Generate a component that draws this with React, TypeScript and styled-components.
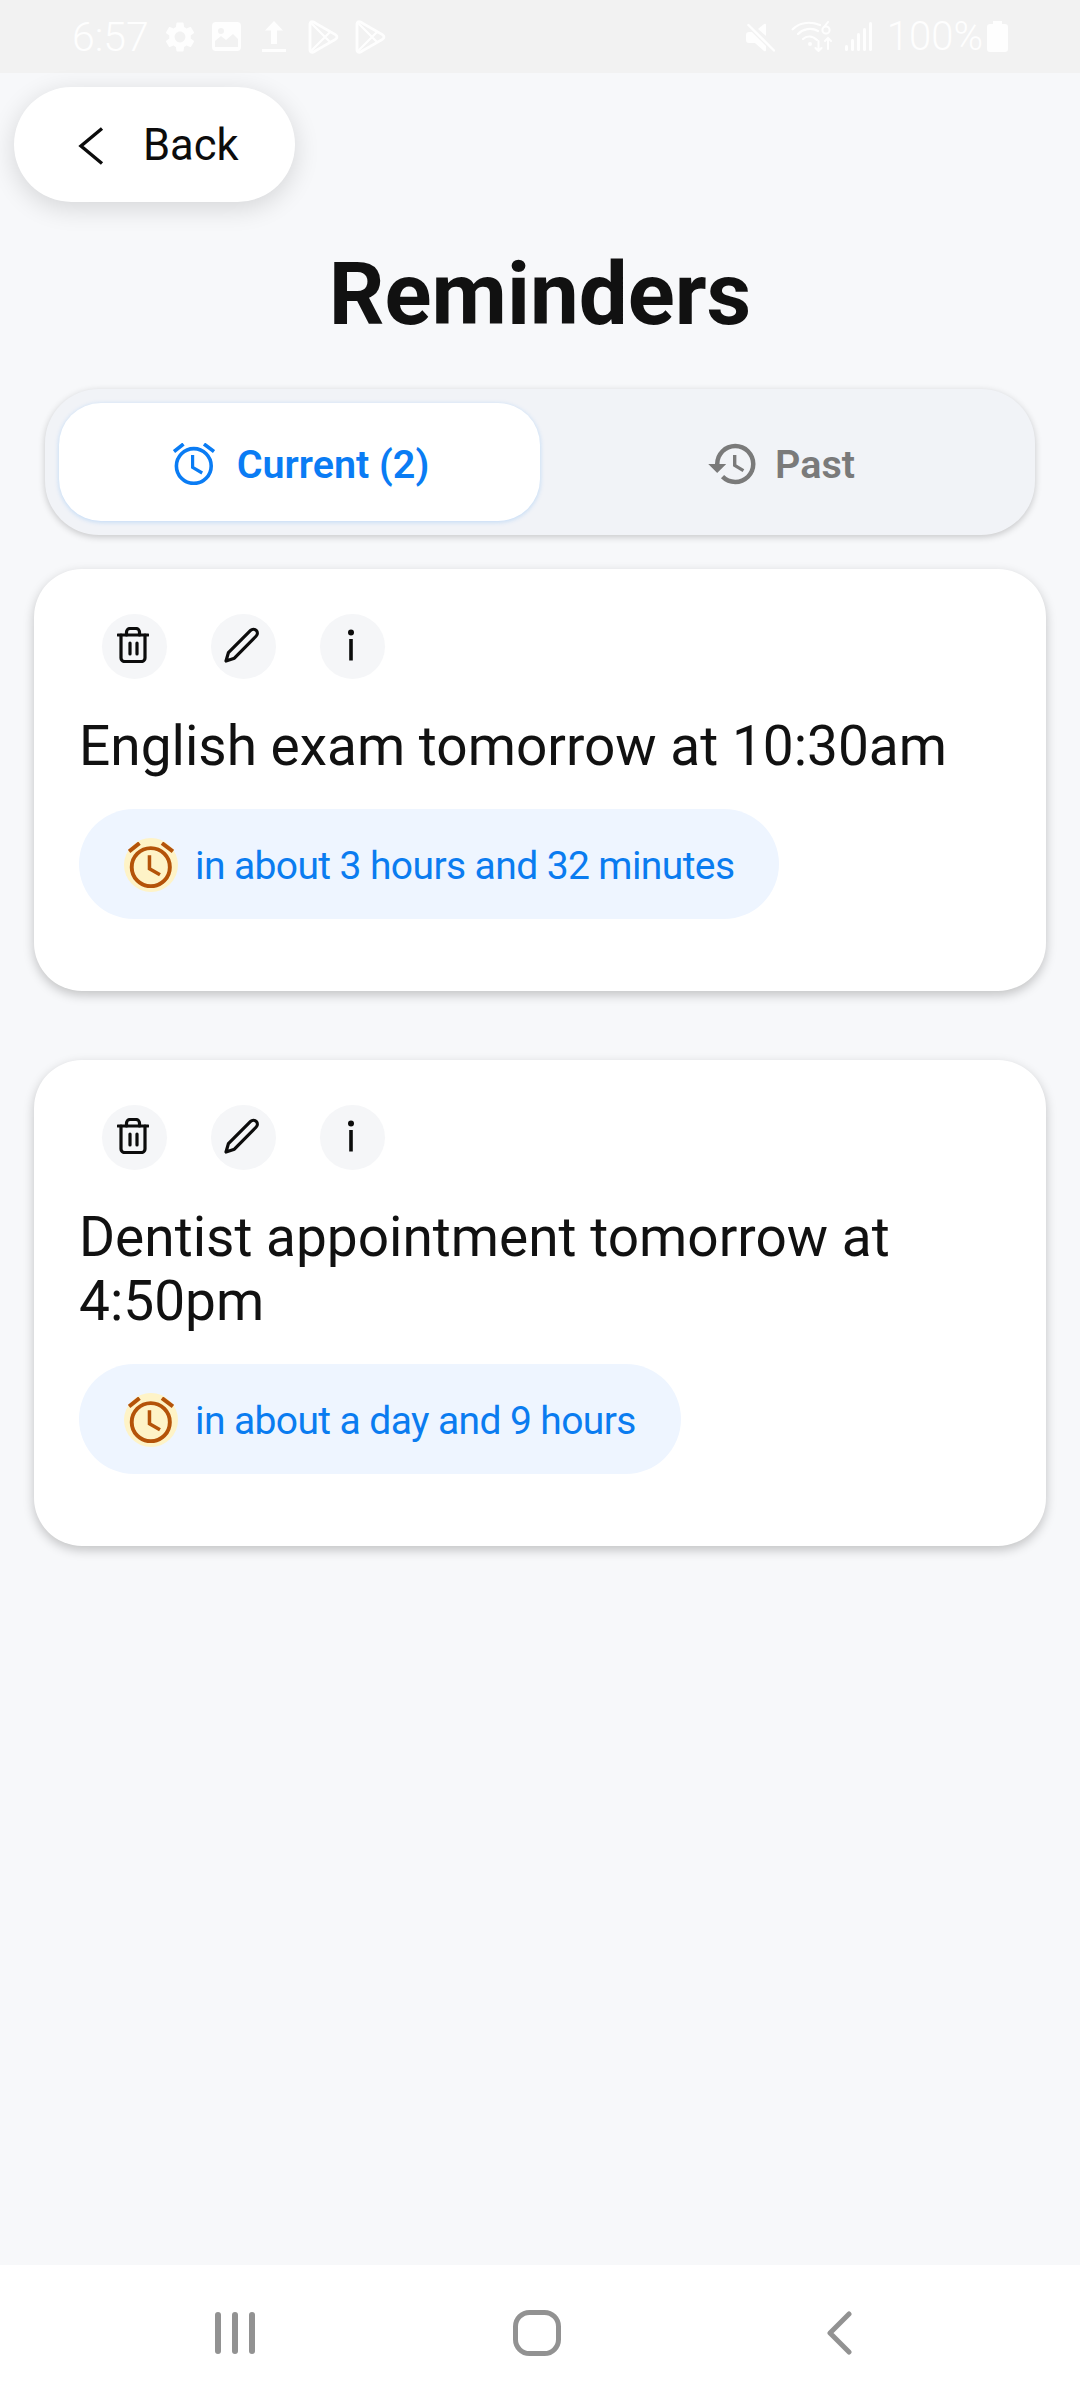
import { createGlobalStyle } from "styled-components";
import styled from "styled-components";
import { MdHistory, MdSettings } from "react-icons/md";

const GlobalStyle = createGlobalStyle`
  html, body {
    margin: 0;
    padding: 0;
    background: #f7f8fa;
  }
  * {
    box-sizing: border-box;
  }
`;

const Page = styled.div`
  width: 1080px;
  height: 2400px;
  display: flex;
  flex-direction: column;
  background: #f7f8fa;
  font-family: Roboto, "Liberation Sans", sans-serif;
  overflow: hidden;
`;

const StatusBar = styled.header`
  height: 73px;
  flex: none;
  display: flex;
  align-items: center;
  justify-content: space-between;
  padding: 0 72px;
  background: #f2f2f2;
  color: #fefefe;
`;

const StatusGroup = styled.div`
  display: flex;
  align-items: center;
`;

const StatusText = styled.span<{ $size: number }>`
  font-size: ${(p) => p.$size}px;
  font-weight: 300;
  line-height: 46px;
`;

const StatusIcon = styled.span<{ $left: number }>`
  display: flex;
  margin-left: ${(p) => p.$left}px;
`;

const Main = styled.main`
  flex: 1;
  display: flex;
  flex-direction: column;
  padding-top: 14px;
`;

const BackButton = styled.button`
  align-self: flex-start;
  width: 281px;
  height: 115px;
  margin-left: 14px;
  display: flex;
  align-items: center;
  gap: 39px;
  padding: 2px 0 0 64px;
  border: 0;
  border-radius: 58px;
  background: #fff;
  color: #0c0c0c;
  font-family: inherit;
  font-size: 43.5px;
  box-shadow: 0 6px 26px rgba(0, 0, 0, 0.14);
`;

const Title = styled.h1`
  margin: 42px 0 45px;
  font-size: 87px;
  line-height: 100px;
  font-weight: 700;
  text-align: center;
  color: #111;
`;

const Tabs = styled.div`
  width: 990px;
  height: 146px;
  margin: 0 0 34px 45px;
  padding: 14px 0 14px 14px;
  display: flex;
  border-radius: 54px;
  background: #f1f3f7;
  box-shadow: 0 2px 7px rgba(0, 0, 0, 0.2);
`;

const Tab = styled.div<{ $active?: boolean }>`
  flex: ${(p) => (p.$active ? "0 0 481px" : 1)};
  display: flex;
  align-items: center;
  justify-content: center;
  gap: ${(p) => (p.$active ? 22 : 15)}px;
  padding: ${(p) => (p.$active ? "4px 0 0 3px" : "4px 14px 0 0")};
  border-radius: 42px;
  font-size: 39.5px;
  font-weight: 600;
  color: ${(p) => (p.$active ? "#0a7cf4" : "#7a7a7a")};
  background: ${(p) => (p.$active ? "#fff" : "transparent")};
  box-shadow: ${(p) => (p.$active ? "0 1px 5px rgba(10, 124, 244, 0.22)" : "none")};
`;

const CardList = styled.div`
  display: flex;
  flex-direction: column;
  gap: 69px;
  margin-left: 34px;
`;

const Card = styled.article`
  width: 1012px;
  padding: 45px 45px 72px;
  border-radius: 48px;
  background: #fff;
  box-shadow: 0 4px 11px rgba(0, 0, 0, 0.22);
`;

const CardActions = styled.div`
  display: flex;
  gap: 44px;
  padding-left: 23px;
`;

const ActionButton = styled.button`
  width: 65px;
  height: 65px;
  display: flex;
  align-items: center;
  justify-content: center;
  padding: 0 3px 4px 0;
  border: 0;
  border-radius: 50%;
  background: #f5f6f8;
  color: #0c0c0c;
`;

const ReminderText = styled.p`
  margin: 35px 0 31px;
  font-size: 55px;
  line-height: 64px;
  color: #111;
`;

const TimePill = styled.div`
  width: fit-content;
  height: 110px;
  display: flex;
  align-items: center;
  gap: 17px;
  padding: 1px 45px 0;
  border-radius: 55px;
  background: #eef5ff;
  color: #0a7cf0;
  font-size: 39px;
  letter-spacing: -0.6px;
`;

const DueText = styled.span`
  padding-top: 2px;
`;

const AlarmBadge = styled.span`
  width: 54px;
  height: 54px;
  flex: none;
  display: flex;
  align-items: center;
  justify-content: center;
  border-radius: 50%;
  background: #fef3c7;
  color: #b45309;
`;

const NavBar = styled.nav`
  height: 135px;
  flex: none;
  display: flex;
  align-items: center;
  padding-left: 215px;
  background: #fff;
  color: #929292;
`;

const NavIcon = styled.svg<{ $left?: number }>`
  margin-left: ${(p) => p.$left ?? 0}px;
`;

// Alarm clock shared by the tab and the time pills
const AlarmIcon = ({ size, stroke }: { size: number; stroke: number }) => (
  <svg width={size} height={size} viewBox="0 0 42 42" fill="none" stroke="currentColor" strokeWidth={stroke}>
    <circle cx="20.8" cy="23" r="17.4" />
    <path d="M1 8.6 10.5 1M31 1l10 7.6" />
    <path d="M19.6 12v12.4l9.6 5.6" strokeWidth={stroke - 0.4} />
  </svg>
);

const TrashIcon = () => (
  <svg width="32" height="36" viewBox="0 0 32 36" fill="none" stroke="currentColor" strokeWidth="3.2" strokeLinecap="round" strokeLinejoin="round">
    <path d="M1 8h30" />
    <path d="M9.5 8V5a3.5 3.5 0 0 1 3.5-3.5h6A3.5 3.5 0 0 1 22.500 5v3" />
    <path d="M4 8v23a3.500 3.500 0 0 0 3.500 3.500h17A3.500 3.500 0 0 0 28 31V8" />
    <path d="M13 16v11M20 16v11" />
  </svg>
);

const PencilIcon = () => (
  <svg width="36" height="36" viewBox="0 0 36 36" fill="none" stroke="currentColor" strokeWidth="3.2" strokeLinejoin="round">
    <path d="M2 34l2.400-8.400L26.600 3.400a4 4 0 0 1 5.600 0 4 4 0 0 1 0 5.600L10.400 31.200 2 34z" />
  </svg>
);

const InfoIcon = () => (
  <svg width="8" height="32" viewBox="0 0 8 32" fill="currentColor">
    <circle cx="4" cy="3.500" r="3" />
    <rect x="2.200" y="10" width="3.600" height="21.500" />
  </svg>
);

const ChevronIcon = () => (
  <svg width="26" height="38" viewBox="0 0 26 38" fill="none" stroke="currentColor" strokeWidth="3.400">
    <path d="M24 1.500 3 19l21 17.500" />
  </svg>
);

const GalleryIcon = () => (
  <svg width="29" height="29" viewBox="0 0 29 29" fill="currentColor" fillRule="evenodd">
    <path d="M4 0h21a4 4 0 0 1 4 4v21a4 4 0 0 1-4 4H4a4 4 0 0 1-4-4V4a4 4 0 0 1 4-4z M3 25v-6l6-5 5 4 7-6 5 5v8z M9 6a3 3 0 1 0 0 6 3 3 0 0 0 0-6z" />
  </svg>
);

const UploadIcon = () => (
  <svg width="24" height="31" viewBox="0 0 24 31" fill="currentColor">
    <path d="M12 0l9 9.500h-6V23H9V9.500H3z" />
    <rect y="28" width="24" height="3" />
  </svg>
);

const PlayOutline = () => (
  <svg width="31" height="34" viewBox="0 0 31 34" fill="none" stroke="currentColor" strokeWidth="2.800" strokeLinejoin="round">
    <path d="M2 4c0-2 1.500-3 3.400-2l22 12.600c2 1.200 2 3.600 0 4.800L5.400 32c-1.900 1-3.400 0-3.400-2z" />
    <path d="M3 3l19 19M3 31l19-19" strokeWidth="2.200" />
  </svg>
);

const MuteIcon = () => (
  <svg width="29" height="30" viewBox="0 0 29 30" fill="currentColor">
    <path d="M12 7l6-5q2-1 2 1v11z" />
    <path d="M8 10H3a3 3 0 0 0-3 3v5a3 3 0 0 0 3 3h6l9 8q2 1 2-1v-8z" />
    <path d="M2.400 3 28 28.500" fill="none" stroke="#f2f2f2" strokeWidth="5" />
    <path d="M2.400 3 28 28.500" fill="none" stroke="currentColor" strokeWidth="2.400" strokeLinecap="round" />
  </svg>
);

const WifiIcon = () => (
  <svg width="43" height="31" viewBox="0 0 43 31" fill="none" stroke="currentColor" strokeWidth="2.200" strokeLinecap="round">
    <path d="M1.700 8.300C8 2 18 0 29 4M7 13c5-5 13-7 20-3M12 18c3-3 9-4 14 1" />
    <circle cx="19" cy="23" r="2" fill="currentColor" stroke="none" />
    <circle cx="35" cy="9" r="3.600" strokeWidth="2" />
    <path d="M33 6l4-5" strokeWidth="2" />
    <path d="M27.500 20v10M24.500 27l3 3 3-3M37 28V17M34 20l3-3 3 3" strokeWidth="2" />
  </svg>
);

const SignalIcon = () => (
  <svg width="27" height="29" viewBox="0 0 27 29" fill="currentColor">
    <rect x="0" y="23" width="3" height="6" rx="1.500" />
    <rect x="6" y="17" width="3" height="12" rx="1.500" />
    <rect x="12" y="11" width="3" height="18" rx="1.500" />
    <rect x="18" y="6" width="3" height="23" rx="1.500" />
    <rect x="24" y="0" width="3" height="29" rx="1.500" />
  </svg>
);

const BatteryIcon = () => (
  <svg width="21" height="31" viewBox="0 0 21 31" fill="currentColor">
    <path d="M6 0h9v3h3a3 3 0 0 1 3 3v22a3 3 0 0 1-3 3H3a3 3 0 0 1-3-3V6a3 3 0 0 1 3-3h3z" />
  </svg>
);

const reminders = [
  { id: 1, text: "English exam tomorrow at 10:30am", due: "in about 3 hours and 32 minutes" },
  { id: 2, text: "Dentist appointment tomorrow at 4:50pm", due: "in about a day and 9 hours" },
];

const App = () => {
  return (
    <Page>
      <GlobalStyle />
      <StatusBar>
        <StatusGroup>
          <StatusText $size={41}>6:57</StatusText>
          <StatusIcon $left={13}>
            <MdSettings size={36} />
          </StatusIcon>
          <StatusIcon $left={14}>
            <GalleryIcon />
          </StatusIcon>
          <StatusIcon $left={21}>
            <UploadIcon />
          </StatusIcon>
          <StatusIcon $left={22}>
            <PlayOutline />
          </StatusIcon>
          <StatusIcon $left={16}>
            <PlayOutline />
          </StatusIcon>
        </StatusGroup>
        <StatusGroup>
          <StatusIcon $left={0}>
            <MuteIcon />
          </StatusIcon>
          <StatusIcon $left={16}>
            <WifiIcon />
          </StatusIcon>
          <StatusIcon $left={11}>
            <SignalIcon />
          </StatusIcon>
          <StatusIcon $left={15}>
            <StatusText $size={40}>100%</StatusText>
          </StatusIcon>
          <StatusIcon $left={4}>
            <BatteryIcon />
          </StatusIcon>
        </StatusGroup>
      </StatusBar>

      <Main>
        <BackButton>
          <ChevronIcon />
          Back
        </BackButton>
        <Title>Reminders</Title>
        <Tabs>
          <Tab $active>
            <AlarmIcon size={42} stroke={3.6} />
            Current (2)
          </Tab>
          <Tab>
            <MdHistory size={54} />
            Past
          </Tab>
        </Tabs>
        <CardList>
          {reminders.map((r) => (
            <Card key={r.id}>
              <CardActions>
                <ActionButton>
                  <TrashIcon />
                </ActionButton>
                <ActionButton>
                  <PencilIcon />
                </ActionButton>
                <ActionButton>
                  <InfoIcon />
                </ActionButton>
              </CardActions>
              <ReminderText>{r.text}</ReminderText>
              <TimePill>
                <AlarmBadge>
                  <AlarmIcon size={46} stroke={3.6} />
                </AlarmBadge>
                <DueText>{r.due}</DueText>
              </TimePill>
            </Card>
          ))}
        </CardList>
      </Main>

      <NavBar>
        <NavIcon width="40" height="44" viewBox="0 0 40 44" fill="currentColor">
          <rect x="0" y="1" width="6" height="42" rx="3" />
          <rect x="17" y="1" width="6" height="42" rx="3" />
          <rect x="34" y="1" width="6" height="42" rx="3" />
        </NavIcon>
        <NavIcon $left={258} width="48" height="46" viewBox="0 0 48 46" fill="none" stroke="currentColor" strokeWidth="5">
          <rect x="2.500" y="2.500" width="43" height="41" rx="14" />
        </NavIcon>
        <NavIcon $left={265} width="26" height="44" viewBox="0 0 26 44" fill="none" stroke="currentColor" strokeWidth="5" strokeLinecap="round" strokeLinejoin="round">
          <path d="M23 3 4 22l19 19" />
        </NavIcon>
      </NavBar>
    </Page>
  );
};

export default App;
